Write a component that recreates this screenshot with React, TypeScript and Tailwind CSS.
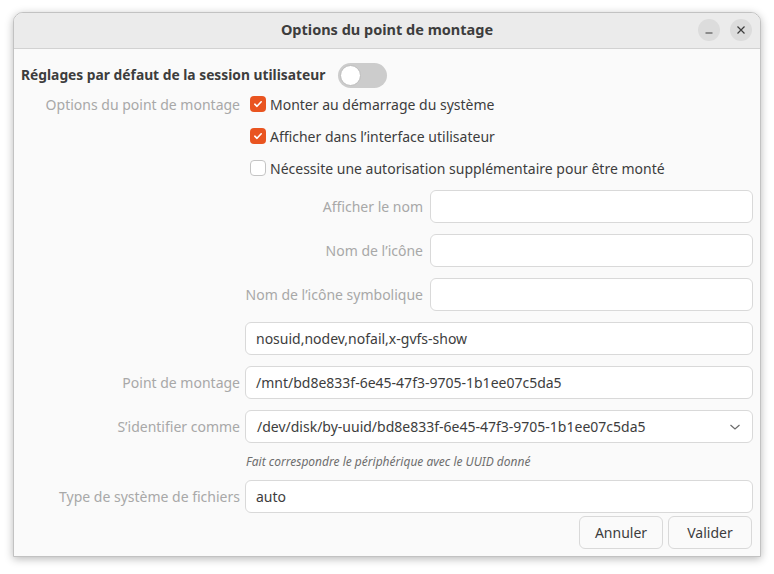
import React from 'react';

const font = { fontFamily: '"Noto Sans", "Open Sans", sans-serif' };

const Check = ({ checked, label }: { checked: boolean; label: string }) => (
  <div className="flex items-center h-[32px] pl-[5px]">
    {checked ? (
      <span className="w-[16px] h-[16px] rounded-[4px] bg-[#e95420] flex items-center justify-center">
        <svg width="10" height="10" viewBox="0 0 10 10">
          <path d="M1.8 5.2 L4 7.3 L8.2 2.8" fill="none" stroke="#fff" strokeWidth="1.6" strokeLinecap="round" strokeLinejoin="round" />
        </svg>
      </span>
    ) : (
      <span className="w-[16px] h-[16px] rounded-[4px] bg-white border border-[#c4c4c4]" />
    )}
    <span className="ml-[4px] text-[#3d3d3d] whitespace-nowrap">{label}</span>
  </div>
);

const Entry = ({ value = '', className = '' }: { value?: string; className?: string }) => (
  <div className={`h-[33px] rounded-[6px] border border-[#d9d9d9] bg-white flex items-center px-[10px] text-[#3d3d3d] whitespace-nowrap ${className}`}>
    {value}
  </div>
);

const Label = ({ children }: { children: React.ReactNode }) => (
  <div className="text-right text-[#a8a8a8] self-center whitespace-nowrap">{children}</div>
);

export default function App() {
  return (
    <div className="w-[774px] h-[574px] bg-white relative text-[14px]" style={font}>
      <div className="absolute left-[13px] top-[12px] w-[748px] h-[545px] rounded-t-[10px] border border-[#c2c2c2] bg-[#fafafa] shadow-[0_2px_8px_rgba(0,0,0,0.28)] flex flex-col overflow-hidden">
        {/* Title bar */}
        <div className="h-[36px] shrink-0 bg-[#ebebeb] border-b border-[#d2d2d2] flex items-center justify-center relative">
          <span className="font-bold text-[#3d3d3d] text-[14.5px] -mt-[1px]">Options du point de montage</span>
          <div className="absolute right-[8px] top-[6px] flex gap-[10px]">
            <span className="w-[22px] h-[22px] rounded-full bg-[#dcdcdc] flex items-center justify-center">
              <svg width="10" height="10" viewBox="0 0 10 10">
                <path d="M1.5 8 H8.5" stroke="#3d3d3d" strokeWidth="1.2" />
              </svg>
            </span>
            <span className="w-[22px] h-[22px] rounded-full bg-[#dcdcdc] flex items-center justify-center">
              <svg width="10" height="10" viewBox="0 0 10 10">
                <path d="M1.5 1.5 L8.5 8.5 M8.5 1.5 L1.5 8.5" stroke="#3d3d3d" strokeWidth="1.2" />
              </svg>
            </span>
          </div>
        </div>

        {/* Body */}
        <div className="flex flex-col px-[7px] pt-[13px]">
          <div className="flex items-center h-[26px]">
            <span className="font-bold text-[#3d3d3d] text-[13.8px]">Réglages par défaut de la session utilisateur</span>
            <span className="ml-[13px] w-[49px] h-[25px] rounded-full bg-[#cccccc] flex items-center px-[2px]">
              <span className="w-[21px] h-[21px] rounded-full bg-white border border-[#bdbdbd]" />
            </span>
          </div>

          <div className="grid grid-cols-[219px_1fr] gap-x-[5px]">
            <div className="text-right text-[#a8a8a8] h-[32px] flex items-center justify-end whitespace-nowrap">Options du point de montage</div>
            <div className="flex flex-col">
              <Check checked label="Monter au démarrage du système" />
              <Check checked label="Afficher dans l’interface utilisateur" />
              <Check checked={false} label="Nécessite une autorisation supplémentaire pour être monté" />

              <div className="grid grid-cols-[178px_1fr] gap-x-[7px] gap-y-[11px] mt-[6px]">
                <Label>Afficher le nom</Label>
                <Entry />
                <Label>Nom de l’icône</Label>
                <Entry />
                <Label>Nom de l’icône symbolique</Label>
                <Entry />
              </div>
              <Entry value="nosuid,nodev,nofail,x-gvfs-show" className="mt-[11px]" />
            </div>

            <div className="h-[33px] mt-[11px] flex items-center justify-end text-[#a8a8a8] whitespace-nowrap">Point de montage</div>
            <Entry value="/mnt/bd8e833f-6e45-47f3-9705-1b1ee07c5da5" className="mt-[11px]" />

            <div className="h-[33px] mt-[11px] flex items-center justify-end text-[#a8a8a8] whitespace-nowrap">S’identifier comme</div>
            <div className="h-[33px] mt-[11px] rounded-[6px] border border-[#d9d9d9] bg-white flex items-center pl-[11px] pr-[11px] text-[#3d3d3d]">
              <span className="flex-1 whitespace-nowrap">/dev/disk/by-uuid/bd8e833f-6e45-47f3-9705-1b1ee07c5da5</span>
              <svg width="12" height="8" viewBox="0 0 12 8">
                <path d="M1.5 2 L6 6 L10.5 2" fill="none" stroke="#6b6b6b" strokeWidth="1.2" />
              </svg>
            </div>

            <div />
            <div className="h-[37px] flex items-center pl-[1px] text-[12px] italic text-[#6e6e6e] whitespace-nowrap">Fait correspondre le périphérique avec le UUID donné</div>

            <div className="h-[33px] flex items-center justify-end text-[#a8a8a8] whitespace-nowrap">Type de système de fichiers</div>
            <Entry value="auto" />
          </div>

          <div className="flex justify-end gap-[5px] mt-[3px] pr-[1px]">
            <button className="w-[84px] h-[33px] rounded-[6px] border border-[#d9d9d9] bg-[#fafafa] text-[#3d3d3d]">Annuler</button>
            <button className="w-[84px] h-[33px] rounded-[6px] border border-[#d9d9d9] bg-[#fafafa] text-[#3d3d3d]">Valider</button>
          </div>
        </div>
      </div>
    </div>
  );
}
